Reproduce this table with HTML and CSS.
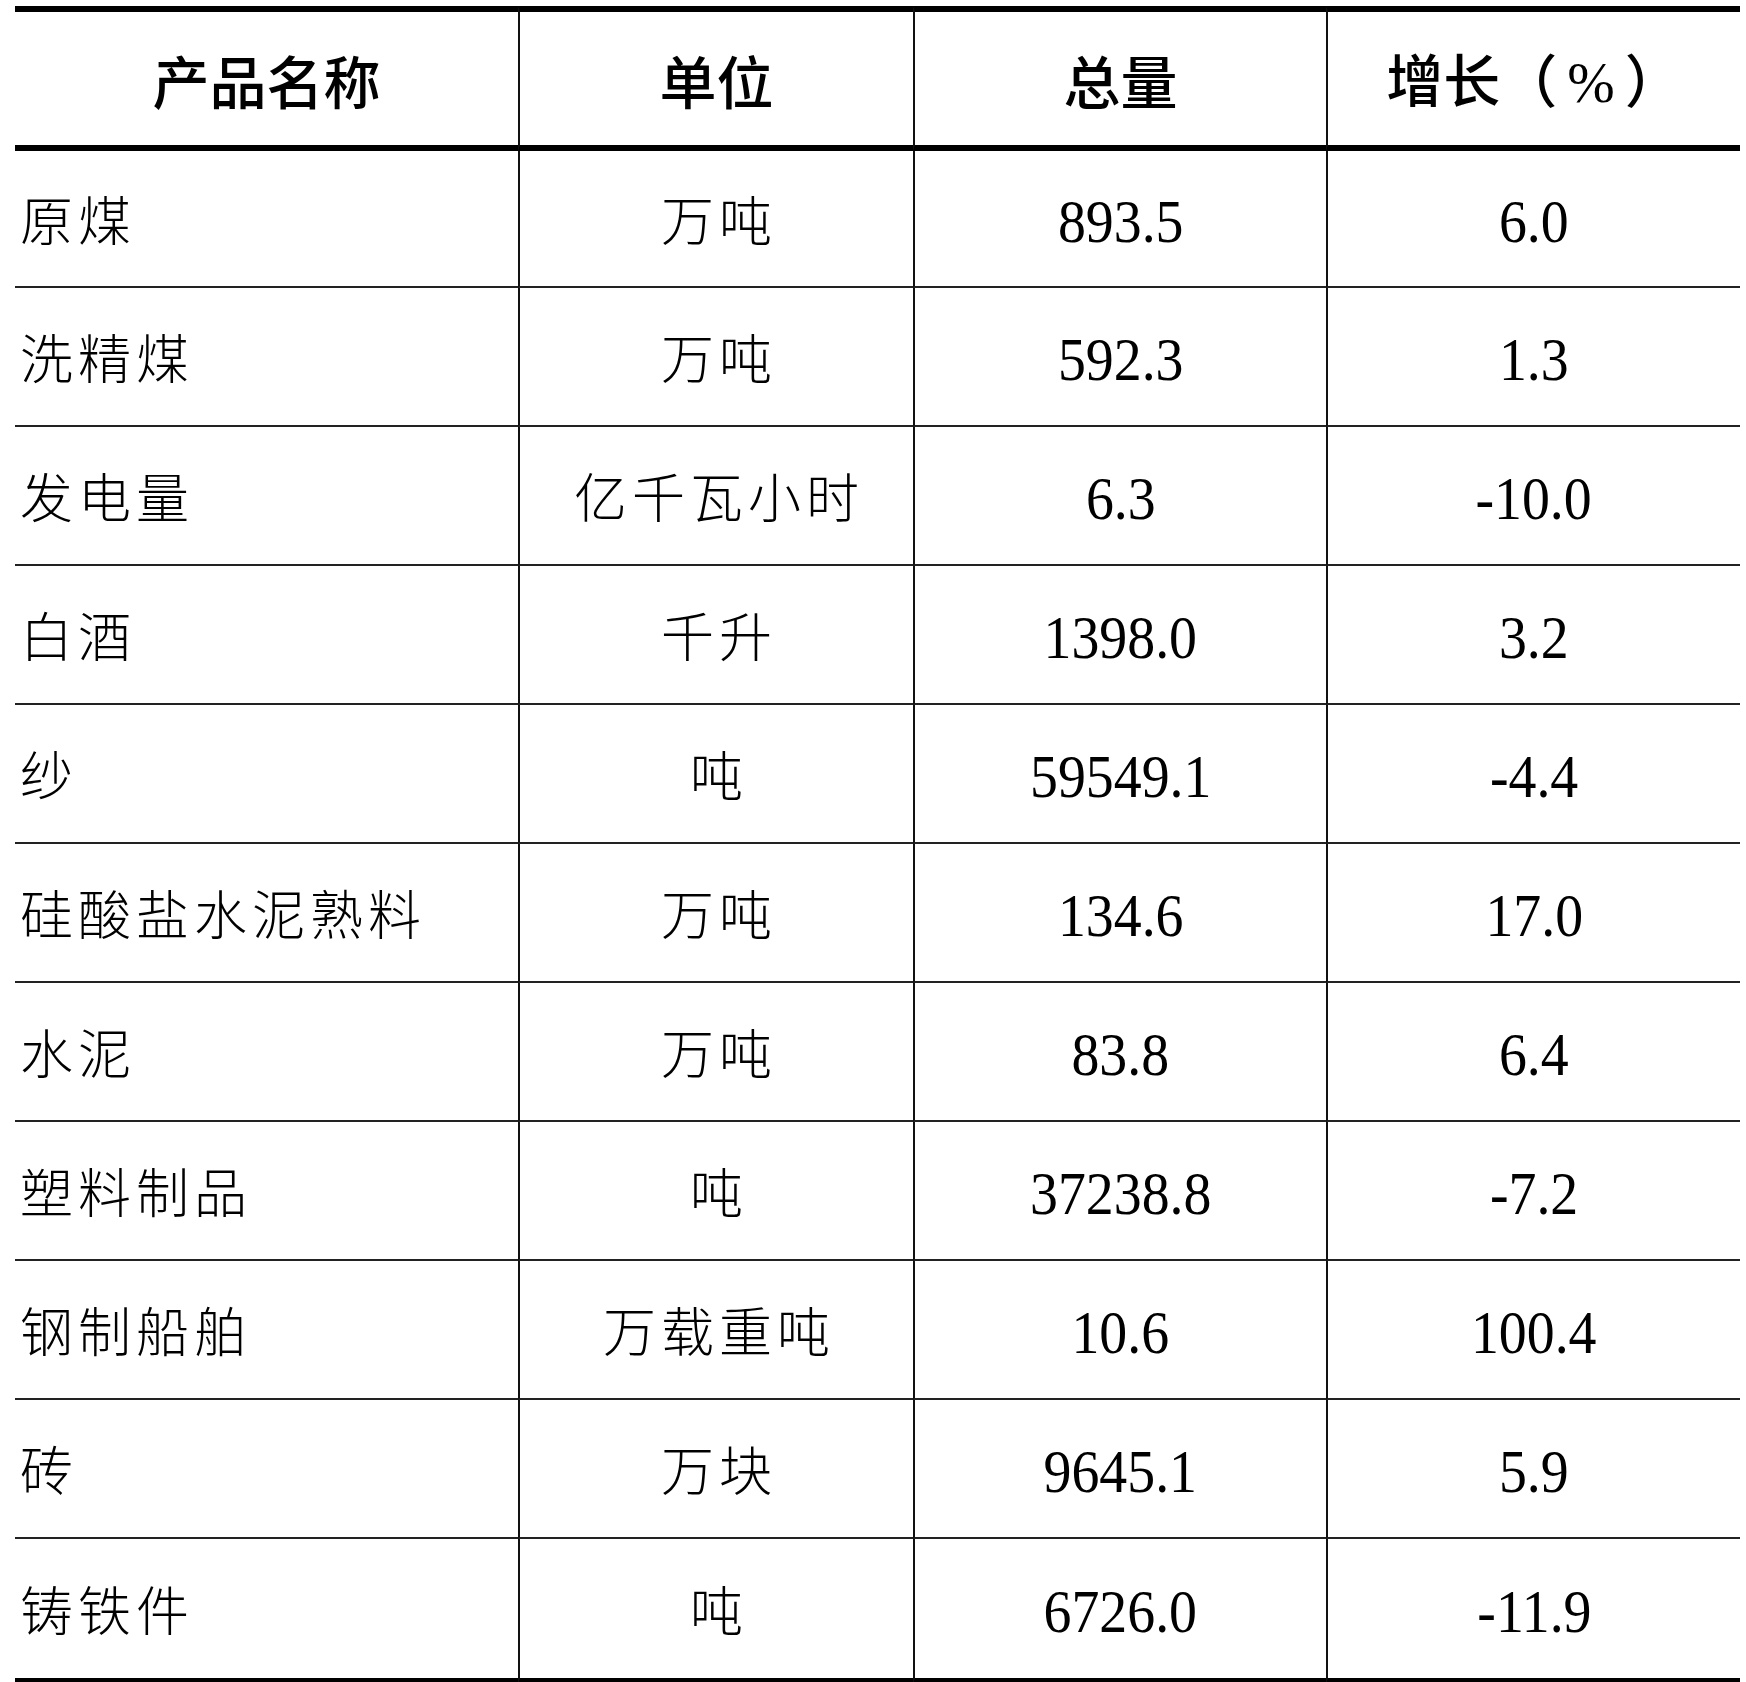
FILE: index.html
```html
<!DOCTYPE html>
<html lang="zh-CN">
<head>
<meta charset="utf-8">
<title>主要工业产品产量</title>
<link rel="stylesheet" href="styles.css">
</head>
<body>
<table class="stats">
  <colgroup>
    <col class="c-name">
    <col class="c-unit">
    <col class="c-total">
    <col class="c-growth">
  </colgroup>
  <thead>
    <tr>
      <th>产品名称</th>
      <th>单位</th>
      <th>总量</th>
      <th>增长（<span class="pct">%</span>）</th>
    </tr>
  </thead>
  <tbody>
    <tr class="first"><td class="name">原煤</td><td class="unit">万吨</td><td class="num"><span>893.5</span></td><td class="num"><span>6.0</span></td></tr>
    <tr><td class="name">洗精煤</td><td class="unit">万吨</td><td class="num"><span>592.3</span></td><td class="num"><span>1.3</span></td></tr>
    <tr><td class="name">发电量</td><td class="unit">亿千瓦小时</td><td class="num"><span>6.3</span></td><td class="num"><span>-10.0</span></td></tr>
    <tr><td class="name">白酒</td><td class="unit">千升</td><td class="num"><span>1398.0</span></td><td class="num"><span>3.2</span></td></tr>
    <tr><td class="name">纱</td><td class="unit">吨</td><td class="num"><span>59549.1</span></td><td class="num"><span>-4.4</span></td></tr>
    <tr><td class="name">硅酸盐水泥熟料</td><td class="unit">万吨</td><td class="num"><span>134.6</span></td><td class="num"><span>17.0</span></td></tr>
    <tr><td class="name">水泥</td><td class="unit">万吨</td><td class="num"><span>83.8</span></td><td class="num"><span>6.4</span></td></tr>
    <tr><td class="name">塑料制品</td><td class="unit">吨</td><td class="num"><span>37238.8</span></td><td class="num"><span>-7.2</span></td></tr>
    <tr><td class="name">钢制船舶</td><td class="unit">万载重吨</td><td class="num"><span>10.6</span></td><td class="num"><span>100.4</span></td></tr>
    <tr><td class="name">砖</td><td class="unit">万块</td><td class="num"><span>9645.1</span></td><td class="num"><span>5.9</span></td></tr>
    <tr class="last"><td class="name">铸铁件</td><td class="unit">吨</td><td class="num"><span>6726.0</span></td><td class="num"><span>-11.9</span></td></tr>
  </tbody>
</table>
</body>
</html>
```

FILE: styles.css
```css
html, body {
  margin: 0;
  padding: 0;
  background: #ffffff;
  overflow: hidden;
}

body {
  color: #000000;
  font-family: "Noto Sans CJK SC", sans-serif;
}

.stats {
  margin: 6px 0 0 15px;
  width: 1725px;
  table-layout: fixed;
  border-collapse: separate;
  border-spacing: 0;
}

.c-name { width: 503px; }
.c-unit { width: 395px; }
.c-total { width: 413px; }
.c-growth { width: 414px; }

.stats th,
.stats td {
  box-sizing: border-box;
  padding: 0;
  vertical-align: middle;
  border-left: 2px solid #111;
}

.stats th:first-child,
.stats td:first-child {
  border-left: none;
}

.stats th {
  height: 145px;
  border-top: 6px solid #000;
  border-bottom: 6px solid #000;
  font-family: "Noto Sans CJK SC", sans-serif;
  font-weight: 500;
  font-size: 57px;
  line-height: 1;
  text-align: center;
  padding-top: 2px;
}

.stats th .pct {
  font-family: "Liberation Serif", serif;
  font-weight: 400;
  margin: 0 10px;
}

.stats td {
  height: 139px;
  border-bottom: 2px solid #222;
  line-height: 1;
}

.stats tr.first td {
  height: 137px;
}

.stats tr.last td {
  height: 145px;
  border-bottom: 6px solid #000;
}

.stats td.name,
.stats td.unit {
  font-family: "Noto Sans CJK SC", sans-serif;
  font-weight: 300;
  font-size: 53px;
  letter-spacing: 5px;
}

.stats td.name {
  text-align: left;
  padding-left: 5px;
}

.stats td.unit {
  text-align: center;
  padding-left: 5px;
}

.stats td.num {
  text-align: center;
  font-family: "Liberation Serif", "Times New Roman", serif;
  font-size: 62px;
}

.stats td.num span {
  display: inline-block;
  transform: scaleX(0.9);
  padding-top: 4px;
}
```
